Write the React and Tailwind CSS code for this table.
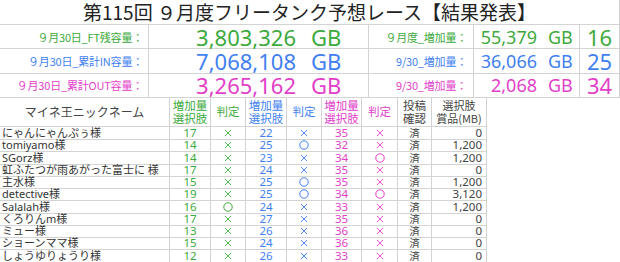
import React from "react";

const GREEN = "text-[#3daa3d]";
const BLUE = "text-[#3f7ff2]";
const PINK = "text-[#e23fc9]";

const summary = [
  {
    color: GREEN,
    label: "９月30日_FT残容量：",
    total: "3,803,326",
    label2: "９月度_増加量：",
    diff: "55,379",
    count: "16",
  },
  {
    color: BLUE,
    label: "９月30日_累計IN容量：",
    total: "7,068,108",
    label2: "9/30_増加量：",
    diff: "36,066",
    count: "25",
  },
  {
    color: PINK,
    label: "９月30日_累計OUT容量：",
    total: "3,265,162",
    label2: "9/30_増加量：",
    diff: "2,068",
    count: "34",
  },
];

const rows = [
  ["にゃんにゃんぷぅ様", 17, "x", 22, "x", 35, "x", "0"],
  ["tomiyamo様", 14, "x", 25, "o", 32, "x", "1,200"],
  ["SGorz様", 14, "x", 23, "x", 34, "o", "1,200"],
  ["虹ふたつが雨あがった富士に 様", 17, "x", 24, "x", 35, "x", "0"],
  ["主水様", 15, "x", 25, "o", 35, "x", "1,200"],
  ["detective様", 19, "x", 25, "o", 34, "o", "3,120"],
  ["Salalah様", 16, "o", 24, "x", 33, "x", "1,200"],
  ["くろりんm様", 17, "x", 27, "x", 35, "x", "0"],
  ["ミュー様", 13, "x", 26, "x", 36, "x", "0"],
  ["ショーンママ様", 15, "x", 24, "x", 36, "x", "0"],
  ["しょうゆりょうり様", 12, "x", 26, "x", 33, "x", "0"],
];

const cell = "border-r border-b border-[#d3d3d3] flex items-center";
const cols = "grid grid-cols-[170px_41px_35px_41px_35px_40px_36px_34px_55px]";

// 判定 marks drawn thin like the sheet's glyphs
const Mark = ({ v, color }) => (
  <div className={`${cell} justify-center ${color}`}>
    {v === "o" ? (
      <svg width="10" height="10" viewBox="0 0 10 10">
        <circle cx="5" cy="5" r="4.2" fill="none" stroke="currentColor" strokeWidth="1" />
      </svg>
    ) : (
      <svg width="8" height="8" viewBox="0 0 8 8">
        <path d="M1 1L7 7M7 1L1 7" stroke="currentColor" strokeWidth="0.9" />
      </svg>
    )}
  </div>
);

export default function App() {
  return (
    <div className="w-[620px] h-[262px] bg-white overflow-hidden font-['Noto_Sans','Noto_Sans_CJK_JP',sans-serif]">
      <div className="h-[25px] border-b border-r border-[#d3d3d3] flex items-center justify-center text-[19px] leading-[24px] text-[#222] font-['Noto_Sans_CJK_JP',sans-serif]">
        第115回 ９月度フリータンク予想レース【結果発表】
      </div>

      {summary.map((s) => (
        <div
          key={s.total}
          className={`grid grid-cols-[149px_220px_105px_106px_1fr] h-[24.33px] ${s.color}`}
        >
          <div className={`${cell} justify-end pr-[5px] text-[11px] leading-[14px] tracking-[-0.2px] font-['Noto_Sans_CJK_JP',sans-serif]`}>
            {s.label}
          </div>
          <div className={`${cell} text-[22px] leading-[22px]`}>
            <span className="w-[147px] text-right">{s.total}</span>
            <span className="ml-[15px]">GB</span>
          </div>
          <div className={`${cell} justify-end pr-[6px] text-[11px] leading-[14px] tracking-[-0.2px] font-['Noto_Sans_CJK_JP',sans-serif]`}>
            {s.label2}
          </div>
          <div className={`${cell} text-[18px] leading-[20px]`}>
            <span className="w-[63px] text-right">{s.diff}</span>
            <span className="ml-[11px]">GB</span>
          </div>
          <div className={`${cell} justify-center text-[22px] leading-[22px]`}>{s.count}</div>
        </div>
      ))}

      <div className="w-[487px]">
        <div className={`${cols} h-[29px] text-[11.5px] leading-[13px] text-center font-['Noto_Sans_CJK_JP',sans-serif]`}>
          <div className={`${cell} justify-center text-[12px] text-[#444]`}>マイネ王ニックネーム</div>
          <div className={`${cell} justify-center ${GREEN}`}>増加量<br />選択肢</div>
          <div className={`${cell} justify-center ${GREEN}`}>判定</div>
          <div className={`${cell} justify-center ${BLUE}`}>増加量<br />選択肢</div>
          <div className={`${cell} justify-center ${BLUE}`}>判定</div>
          <div className={`${cell} justify-center ${PINK}`}>増加量<br />選択肢</div>
          <div className={`${cell} justify-center ${PINK}`}>判定</div>
          <div className={`${cell} justify-center text-[#444]`}>投稿<br />確認</div>
          <div className={`${cell} justify-center text-[#444] text-[11px]`}>選択肢<br />賞品(MB)</div>
        </div>

        {rows.map((r) => (
          <div key={r[0]} className={`${cols} h-[12.27px] text-[11.5px] leading-[12px]`}>
            <div className={`${cell} pl-[2px] text-[#333] text-[11px] whitespace-nowrap`}>{r[0]}</div>
            <div className={`${cell} justify-center ${GREEN}`}>{r[1]}</div>
            <Mark v={r[2]} color={GREEN} />
            <div className={`${cell} justify-center ${BLUE}`}>{r[3]}</div>
            <Mark v={r[4]} color={BLUE} />
            <div className={`${cell} justify-center ${PINK}`}>{r[5]}</div>
            <Mark v={r[6]} color={PINK} />
            <div className={`${cell} justify-center text-[#444] text-[10.5px] font-['Noto_Sans_CJK_JP',sans-serif]`}>済</div>
            <div className={`${cell} justify-end pr-[4px] text-[#444]`}>{r[7]}</div>
          </div>
        ))}
      </div>
    </div>
  );
}
